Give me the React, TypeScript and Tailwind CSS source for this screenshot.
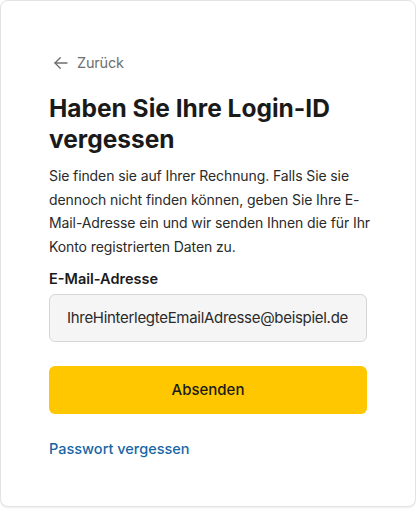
import React from "react";

export default function App() {
  return (
    <div className="w-[416px] h-[509px] bg-white" style={{ fontFamily: "Inter, 'Noto Sans', sans-serif" }}>
      <div className="h-[507px] w-[416px] rounded-[8px] border border-[#e3e3e3] shadow-[0_1px_2px_rgba(0,0,0,0.08)] bg-white px-[48px] pt-[52px]">
        <div className="flex items-center gap-[7px] text-[#6f6f6f] text-[14.5px] h-[20px] tracking-[-0.2px]">
          <svg width="18" height="18" viewBox="0 0 24 24" fill="none" stroke="#6f6f6f" strokeWidth="1.8" strokeLinecap="round" strokeLinejoin="round" className="ml-[3px]">
            <path d="M20 12H4" />
            <path d="M11 5l-7 7 7 7" />
          </svg>
          <span>Zurück</span>
        </div>
        <h1 className="mt-[20px] text-[24.5px] leading-[31px] font-bold text-[#1a1a1a] tracking-[0px]">
          Haben Sie Ihre Login-ID<br />vergessen
        </h1>
        <p className="mt-[9px] text-[14px] leading-[23.6px] text-[#2a2a2a] whitespace-nowrap tracking-[-0.1px]">
          <span className="block">Sie finden sie auf Ihrer Rechnung. Falls Sie sie</span>
          <span className="block">dennoch nicht finden können, geben Sie Ihre E-</span>
          <span className="block">Mail-Adresse ein und wir senden Ihnen die für Ihr</span>
          <span className="block">Konto registrierten Daten zu.</span>
        </p>
        <div className="mt-[11px] text-[14.5px] font-semibold text-[#1a1a1a] leading-[20px]">E-Mail-Adresse</div>
        <div className="mt-[5px] h-[48px] w-[318px] rounded-[6px] border border-[#d6d6d6] bg-[#f5f5f5] flex items-center pl-[17px] text-[15px] text-[#2a2a2a] tracking-[-0.3px] whitespace-nowrap">
          IhreHinterlegteEmailAdresse@beispiel.de
        </div>
        <button className="mt-[24px] h-[48px] w-[318px] rounded-[6px] bg-[#ffc700] text-[15px] font-medium text-[#1a1a1a] flex items-center justify-center">
          Absenden
        </button>
        <div className="mt-[25px] text-[14.5px] font-medium text-[#1766a6] leading-[20px]">Passwort vergessen</div>
      </div>
    </div>
  );
}
